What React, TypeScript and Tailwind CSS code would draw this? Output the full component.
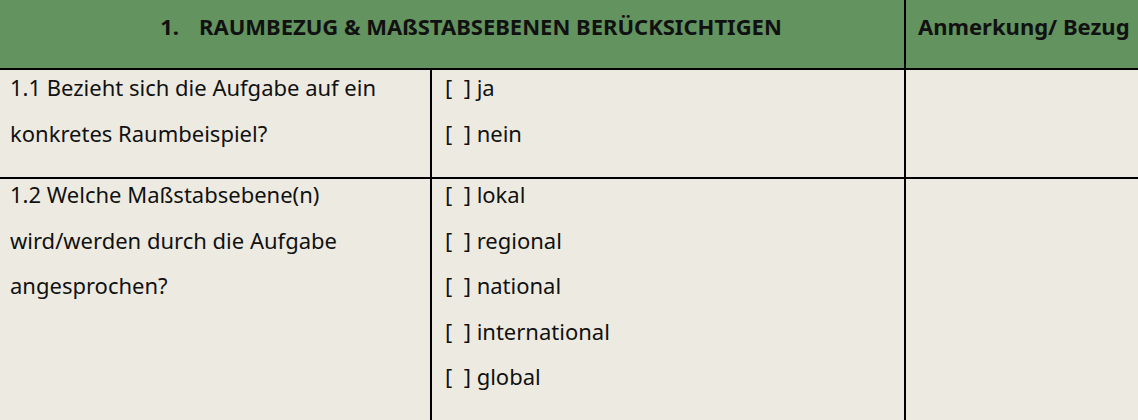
import React from "react";

const Line = ({ children }: { children: React.ReactNode }) => (
  <div className="h-[45.5px] leading-[30px] whitespace-nowrap">{children}</div>
);

export default function App() {
  return (
    <div
      className="w-[1138px] h-[420px] overflow-hidden bg-[#edebe1] text-[#111] text-[22px]"
      style={{ fontFamily: '"Noto Sans", "Open Sans", sans-serif' }}
    >
      {/* Header */}
      <div className="flex h-[68px] bg-[#63935f] font-bold text-[22px]">
        <div className="w-[904px] pt-[11px] pl-[38px] leading-[30px] text-center whitespace-nowrap">
          <span className="mr-[20px]">1.</span>RAUMBEZUG &amp; MAßSTABSEBENEN BERÜCKSICHTIGEN
        </div>
        <div className="w-[2px] bg-black" />
        <div className="flex-1 pt-[11px] pl-[12px] leading-[30px] whitespace-nowrap">Anmerkung/ Bezug</div>
      </div>
      <div className="h-[2px] bg-black" />
      {/* Row 1 */}
      <div className="flex h-[107px]">
        <div className="w-[430px] pt-[2px] pl-[10px]">
          <Line>1.1 Bezieht sich die Aufgabe auf ein</Line>
          <Line>konkretes Raumbeispiel?</Line>
        </div>
        <div className="w-[2px] bg-black" />
        <div className="w-[472px] pt-[2px] pl-[13px]">
          <Line>[&nbsp;&nbsp;] ja</Line>
          <Line>[&nbsp;&nbsp;] nein</Line>
        </div>
        <div className="w-[2px] bg-black" />
        <div className="flex-1" />
      </div>
      <div className="h-[2px] bg-black" />
      {/* Row 2 */}
      <div className="flex h-[241px]">
        <div className="w-[430px] pl-[10px]">
          <Line>1.2 Welche Maßstabsebene(n)</Line>
          <Line>wird/werden durch die Aufgabe</Line>
          <Line>angesprochen?</Line>
        </div>
        <div className="w-[2px] bg-black" />
        <div className="w-[472px] pl-[13px]">
          <Line>[&nbsp;&nbsp;] lokal</Line>
          <Line>[&nbsp;&nbsp;] regional</Line>
          <Line>[&nbsp;&nbsp;] national</Line>
          <Line>[&nbsp;&nbsp;] international</Line>
          <Line>[&nbsp;&nbsp;] global</Line>
        </div>
        <div className="w-[2px] bg-black" />
        <div className="flex-1" />
      </div>
    </div>
  );
}
